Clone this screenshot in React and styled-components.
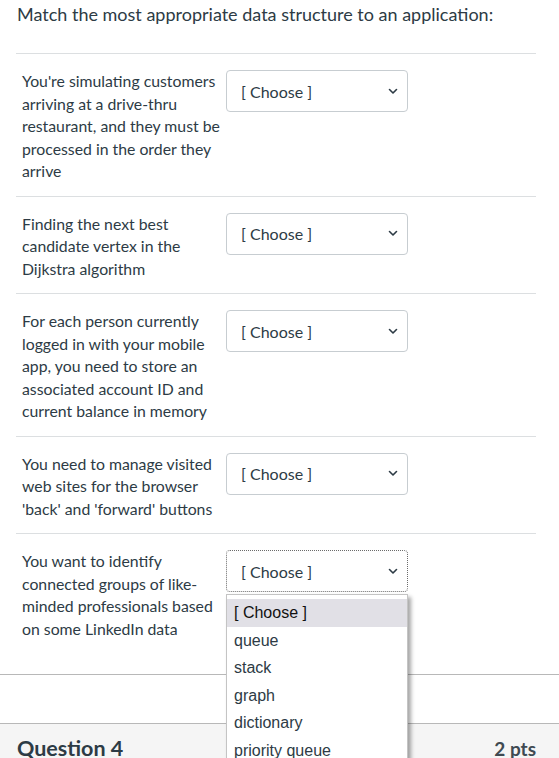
import styled, { createGlobalStyle } from 'styled-components';

const GlobalStyle = createGlobalStyle`
  html, body {
    margin: 0;
    padding: 0;
    background: #fff;
  }
  body {
    font-family: Lato, "Noto Sans", sans-serif;
    color: #2d3b45;
  }
`;

const rows = [
  "You're simulating customers arriving at a drive-thru restaurant, and they must be processed in the order they arrive",
  'Finding the next best candidate vertex in the Dijkstra algorithm',
  'For each person currently logged in with your mobile app, you need to store an associated account ID and current balance in memory',
  "You need to manage visited web sites for the browser 'back' and 'forward' buttons",
  'You want to identify connected groups of like-minded professionals based on some LinkedIn data',
];

const options = ['[ Choose ]', 'queue', 'stack', 'graph', 'dictionary', 'priority queue'];

const Question = styled.div`
  border-bottom: 1px solid #b8b8b8;
  padding: 0 23px 21px 16px;
`;

const Title = styled.p`
  margin: 0;
  padding: 2px 0 26px 1px;
  font-size: 18px;
  line-height: 25px;
`;

const Answers = styled.div`
  display: flex;
  flex-direction: column;
`;

const Row = styled.div`
  display: flex;
  align-items: flex-start;
  border-top: 1px solid #dcdfe1;
  padding: 16px 0 13px 6px;
`;

const Label = styled.div`
  width: 204px;
  flex-shrink: 0;
  font-size: 15.8px;
  line-height: 22.5px;
  padding-right: 2px;
  box-sizing: border-box;
`;

const SelectWrap = styled.div`
  position: relative;
`;

const Select = styled.button`
  display: flex;
  align-items: center;
  justify-content: space-between;
  width: 182px;
  height: 42px;
  box-sizing: border-box;
  padding: 0 9px 0 14px;
  background: #fff;
  border: 1px ${(p) => (p.$open ? 'dotted #6b6b6b' : 'solid #c7cdd1')};
  border-radius: 4px;
  font-family: Lato, "Noto Sans", sans-serif;
  font-size: 16px;
  color: #2d3b45;
  cursor: pointer;
`;

const Menu = styled.ul`
  position: absolute;
  top: calc(100% + 2px);
  left: 0;
  width: 182px;
  box-sizing: border-box;
  margin: 0;
  padding: 4px 0 0;
  list-style: none;
  background: #fff;
  border: 1px solid #c4c4c4;
  box-shadow: 3px 3px 4px rgba(0, 0, 0, 0.35);
  z-index: 5;
`;

const Option = styled.li`
  height: 27.5px;
  line-height: 27.5px;
  padding-left: 7px;
  font-family: "Liberation Sans", Arial, sans-serif;
  font-size: 16px;
  color: ${(p) => (p.$active ? '#111' : '#2d3b45')};
  background: ${(p) => (p.$active ? '#e1e0e6' : '#fff')};
`;

const Next = styled.div`
  margin-top: 48px;
  border-top: 1px solid #b8b8b8;
  background: #f5f5f5;
  display: flex;
  justify-content: space-between;
  align-items: center;
  padding: 10px 23px 10px 17px;
`;

const NextTitle = styled.h2`
  margin: 0;
  font-size: 21.5px;
  font-weight: 700;
  line-height: 28px;
`;

const Points = styled.span`
  font-size: 19px;
  font-weight: 700;
  color: #3f4a52;
`;

const Chevron = () => (
  <svg width="10" height="7" viewBox="0 0 10 7" fill="none">
    <path d="M1.5 1.5L5 5l3.5-3.5" stroke="#2d3b45" strokeWidth="1.6" strokeLinecap="round" strokeLinejoin="round" />
  </svg>
);

export default function App() {
  return (
    <>
      <GlobalStyle />
      <Question>
        <Title>Match the most appropriate data structure to an application:</Title>
        <Answers>
          {rows.map((text, i) => {
            const open = i === rows.length - 1;
            return (
              <Row key={i}>
                <Label>{text}</Label>
                <SelectWrap>
                  <Select $open={open}>
                    <span>[ Choose ]</span>
                    <Chevron />
                  </Select>
                  {open && (
                    <Menu>
                      {options.map((o, j) => (
                        <Option key={o} $active={j === 0}>
                          {o}
                        </Option>
                      ))}
                    </Menu>
                  )}
                </SelectWrap>
              </Row>
            );
          })}
        </Answers>
      </Question>
      <Next>
        <NextTitle>Question 4</NextTitle>
        <Points>2 pts</Points>
      </Next>
    </>
  );
}
